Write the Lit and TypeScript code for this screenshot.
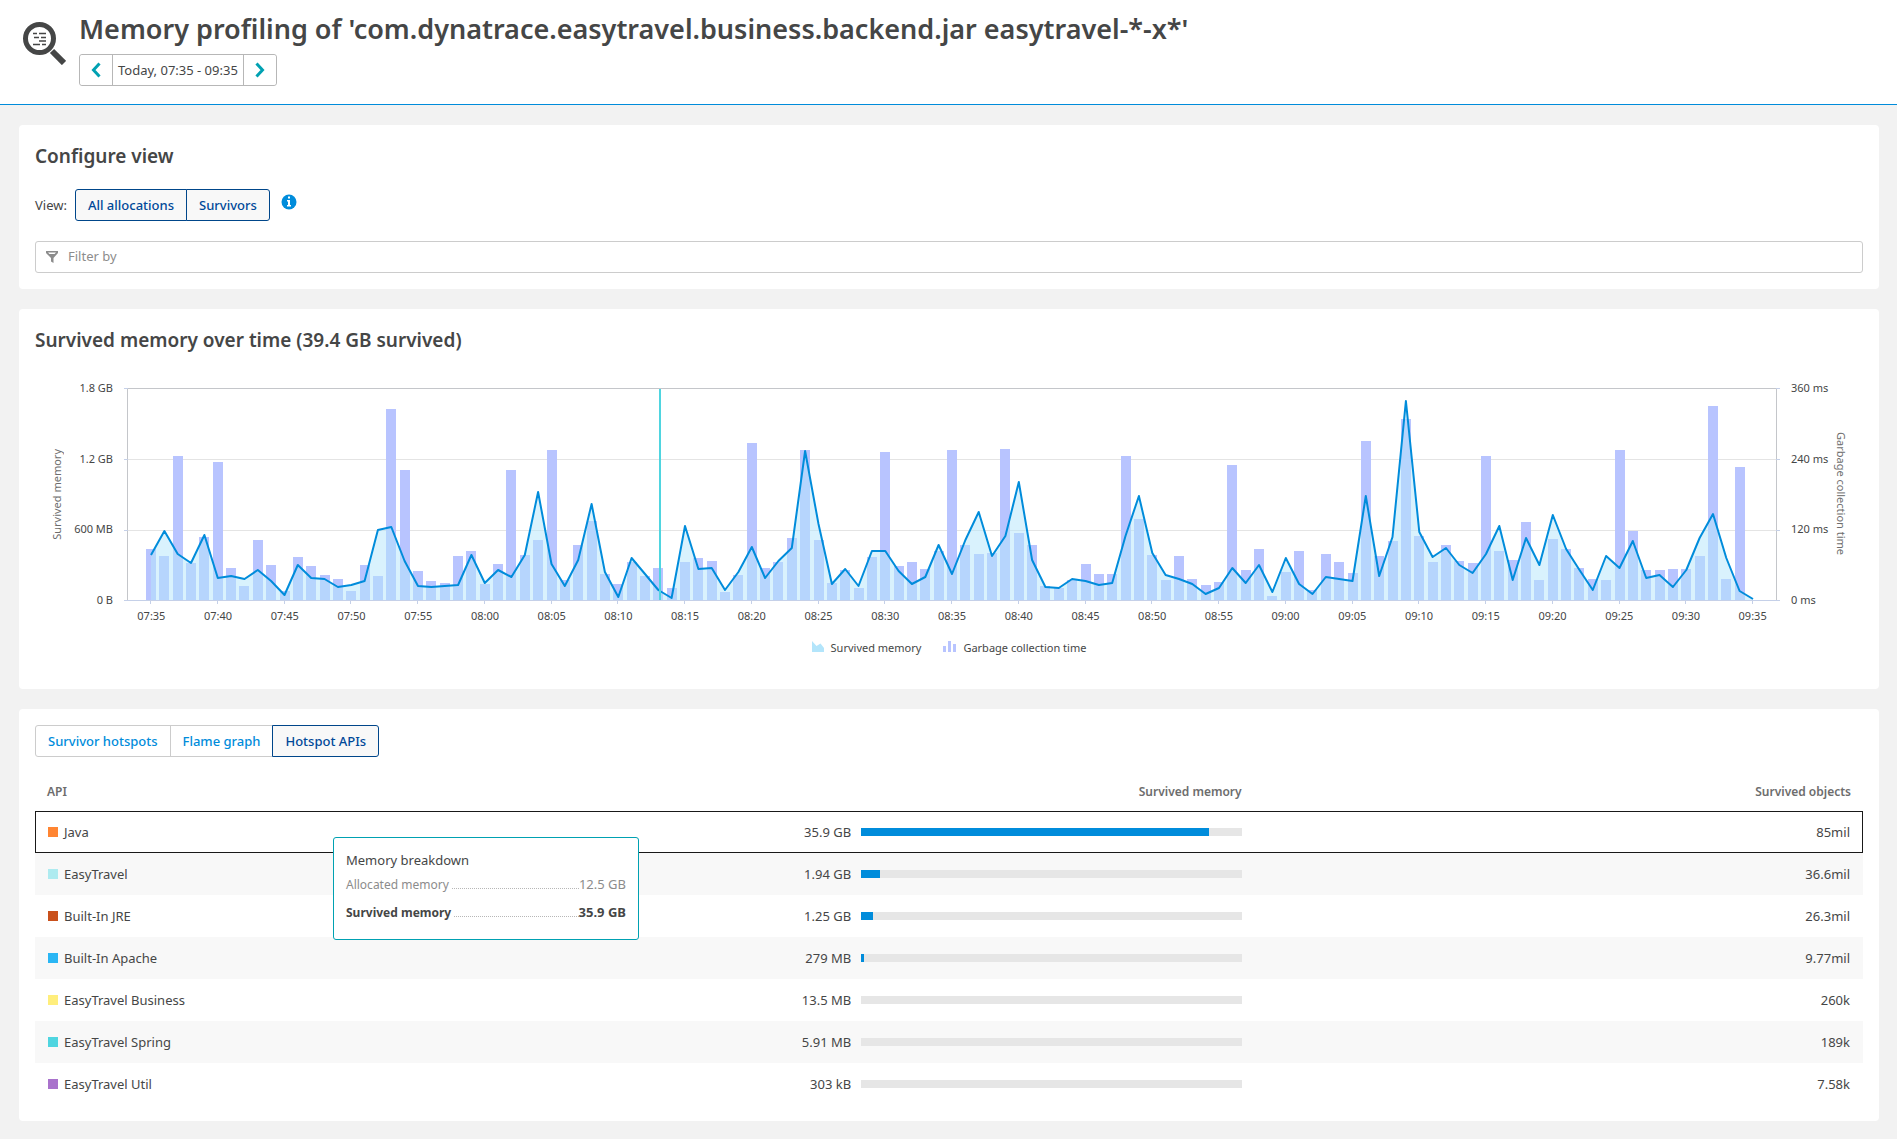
import { LitElement, html, css, svg } from "lit";
import { customElement, property } from "lit/decorators.js";

const SURVIVED = [
  45, 69, 46, 37, 65, 22, 24, 21, 30, 19, 5, 35, 22, 21, 13, 15, 19, 70, 73, 39,
  14, 13, 14, 15, 45, 17, 30, 23, 45, 108, 36, 14, 40, 96, 28, 3, 42, 26, 10, 2,
  74, 31, 32, 10, 28, 53, 22, 39, 52, 149, 76, 16, 31, 14, 49, 49, 29, 16, 23, 55,
  26, 60, 88, 44, 64, 118, 40, 13, 12, 21, 19, 15, 17, 64, 104, 47, 25, 21, 16, 6,
  12, 32, 17, 35, 8, 42, 16, 6, 23, 21, 19, 104, 24, 63, 199, 68, 43, 52, 35, 27,
  46, 74, 20, 62, 35, 85, 51, 30, 10, 44, 32, 59, 22, 25, 13, 30, 62, 86, 42, 9, 1,
];

const GC_TIME = [
  51, 44, 144, 37, 63, 138, 32, 14, 60, 35, 9, 43, 34, 25, 21, 9, 35, 24, 191, 130,
  29, 19, 17, 44, 49, 16, 36, 130, 45, 60, 150, 20, 55, 79, 26, 16, 38, 24, 32, 12,
  38, 42, 39, 8, 25, 157, 32, 38, 62, 150, 60, 17, 30, 12, 43, 148, 34, 38, 31, 49,
  150, 55, 46, 47, 151, 67, 55, 14, 12, 20, 36, 26, 26, 144, 81, 45, 20, 44, 21, 15,
  18, 135, 30, 51, 4, 28, 49, 10, 46, 38, 27, 159, 44, 59, 181, 64, 38, 55, 39, 37,
  144, 49, 40, 78, 20, 61, 51, 32, 21, 20, 150, 69, 30, 30, 31, 31, 44, 194, 21, 133,
];

const PLOT_W = 1648;
const PLOT_H = 212;
const FIRST_X = 23;
const STEP = (PLOT_W - 2 * FIRST_X) / 120;

const TIMES = Array.from({ length: 25 }, (_, i) => {
  const m = 7 * 60 + 35 + i * 5;
  return `${String(Math.floor(m / 60)).padStart(2, "0")}:${String(m % 60).padStart(2, "0")}`;
});

const ROWS = [
  { name: "Java", color: "#ff8532", memory: "35.9 GB", share: 91.3, objects: "85mil" },
  { name: "EasyTravel", color: "#aeebf0", memory: "1.94 GB", share: 5, objects: "36.6mil" },
  { name: "Built-In JRE", color: "#c9501c", memory: "1.25 GB", share: 3.2, objects: "26.3mil" },
  { name: "Built-In Apache", color: "#2ab6f4", memory: "279 MB", share: 0.8, objects: "9.77mil" },
  { name: "EasyTravel Business", color: "#ffee7c", memory: "13.5 MB", share: 0, objects: "260k" },
  { name: "EasyTravel Spring", color: "#4fd5e0", memory: "5.91 MB", share: 0, objects: "189k" },
  { name: "EasyTravel Util", color: "#a972cc", memory: "303 kB", share: 0, objects: "7.58k" },
];

@customElement("memory-chart")
class MemoryChart extends LitElement {
  static styles = css`
    :host { display: block; color: #454646; font-size: 11px; line-height: 16px; }
    .chart {
      display: grid;
      grid-template-columns: 16px 63px 1fr 57px 16px;
      padding: 0 14px;
    }
    .axis-title { display: flex; align-items: center; justify-content: center; color: #6d6d6d; }
    .axis-title span { writing-mode: vertical-rl; white-space: nowrap; }
    .left span { transform: rotate(180deg); }
    .ticks {
      display: flex;
      flex-direction: column;
      justify-content: space-between;
      margin: -8px 0;
      padding: 0 15px;
      white-space: nowrap;
    }
    .ticks.y { padding-left: 0; text-align: right; }
    .plot { display: block; width: 100%; height: 212px; overflow: visible; }
    .times {
      grid-column: 3;
      display: grid;
      grid-template-columns: repeat(25, 1fr);
      margin: 8px -10px 0;
      text-align: center;
    }
    .legend {
      display: flex;
      justify-content: center;
      gap: 22px;
      margin-top: 16px;
    }
    .item { display: flex; align-items: center; gap: 7px; }
    .item svg { margin-bottom: 3px; }
  `;

  render() {
    const x = (i: number) => FIRST_X + i * STEP;
    const points = SURVIVED.map((h, i) => `${x(i).toFixed(1)},${PLOT_H - h}`).join(" ");
    return html`
      <div class="chart">
        <div class="axis-title left"><span>Survived memory</span></div>
        <div class="ticks y"><span>1.8 GB</span><span>1.2 GB</span><span>600 MB</span><span>0 B</span></div>
        <svg class="plot" viewBox="0 0 ${PLOT_W} ${PLOT_H}" preserveAspectRatio="none" role="img"
          aria-label="Survived memory and garbage collection time">
          <g fill="#e4e4e4">
            <rect x="0" y="71" width=${PLOT_W} height="1"></rect>
            <rect x="0" y="142" width=${PLOT_W} height="1"></rect>
          </g>
          <g fill="#b8c4ff">
            ${GC_TIME.map((h, i) => svg`<rect x=${Math.round(x(i) - 5)} y=${PLOT_H - h} width="10" height=${h}></rect>`)}
          </g>
          <polygon fill="#b3e5fb" fill-opacity="0.5"
            points="${FIRST_X},${PLOT_H} ${points} ${PLOT_W - FIRST_X},${PLOT_H}"></polygon>
          <path d="M-.5 212.500V.5H1648.500V212.500" fill="none" stroke="#c4c6ca"></path>
          <path d="M-4 212.500H1652M-4 .5H0M-4 71.500H0M-4 142.500H0M1648 .5h4M1648 71.500h4M1648 142.500h4"
            fill="none" stroke="#c5d0e8"></path>
          ${TIMES.map((_, i) => svg`<rect x=${Math.round(x(i * 5)) - 1} y="213" width="1" height="3" fill="#c5d0e8"></rect>`)}
          <polyline points=${points} fill="none" stroke="#008cdb" stroke-width="2" stroke-linejoin="round"></polyline>
          <rect x="531" y="1" width="2" height="211" fill="#4fd5e0"></rect>
        </svg>
        <div class="ticks"><span>360 ms</span><span>240 ms</span><span>120 ms</span><span>0 ms</span></div>
        <div class="axis-title"><span>Garbage collection time</span></div>
        <div class="times">${TIMES.map((t) => html`<span>${t}</span>`)}</div>
      </div>
      <div class="legend">
        <span class="item">
          <svg width="12" height="11" viewBox="0 0 12 11"><path d="M0 0l4.500 5 4-2.500L12 7v4H0z" fill="#b3e5fb"></path></svg>
          Survived memory
        </span>
        <span class="item">
          <svg width="13" height="11" viewBox="0 0 13 11" fill="#b8c4ff"><path d="M0 5h3v6H0zM5 0h3v11H5zM10 3h3v8h-3z"></path></svg>
          Garbage collection time
        </span>
      </div>
    `;
  }
}

@customElement("hotspot-table")
class HotspotTable extends LitElement {
  @property({ attribute: false }) rows = ROWS;

  static styles = css`
    :host { display: block; }
    table { width: 100%; border-collapse: collapse; table-layout: fixed; }
    th { height: 38px; padding: 0 12px; font-size: 12px; line-height: 16px; font-weight: 600; color: #6d6d6d; text-align: right; }
    th:first-child { text-align: left; }
    td { height: 42px; padding: 0 13px; line-height: 20px; }
    tbody tr:nth-child(even) { background: #f8f8f8; }
    .selected { outline: 1px solid #191919; outline-offset: -1px; }
    .name { position: relative; }
    .api { display: flex; align-items: center; gap: 6px; }
    .swatch { width: 10px; height: 10px; }
    .memory { padding-right: 12px; padding-left: 12px; }
    .meter { display: flex; align-items: center; justify-content: flex-end; gap: 10px; }
    .track { width: 65%; height: 8px; background: #e6e6e6; }
    .fill { height: 8px; background: #008cdb; }
    .objects { text-align: right; }
    .tip {
      position: absolute;
      left: 298px;
      top: 26px;
      z-index: 1;
      width: 306px;
      box-sizing: border-box;
      padding: 12px 12px 17px;
      border: 1px solid #00a1b2;
      border-radius: 3px;
      background: #fff;
    }
    .line { display: flex; align-items: baseline; height: 20px; margin-top: 4px; color: #8c8c8c; }
    .line i { flex: 1; border-bottom: 1px dotted #b7b7b7; }
    .line span { margin-right: 3px; font-size: 12px; }
    .strong { margin-top: 8px; color: #454646; font-weight: 700; }
  `;

  render() {
    return html`
      <table>
        <thead>
          <tr><th scope="col">API</th><th scope="col">Survived memory</th><th scope="col">Survived objects</th></tr>
        </thead>
        <tbody>
          ${this.rows.map((r, i) => html`
            <tr class=${i === 0 ? "selected" : ""}>
              <td class="name">
                <div class="api"><span class="swatch" style="background:${r.color}"></span>${r.name}</div>
                ${i === 0 ? html`
                  <div class="tip" role="tooltip">
                    <div>Memory breakdown</div>
                    <div class="line"><span>Allocated memory</span><i></i>12.5 GB</div>
                    <div class="line strong"><span>Survived memory</span><i></i>35.9 GB</div>
                  </div>` : ""}
              </td>
              <td class="memory">
                <div class="meter">${r.memory}<div class="track"><div class="fill" style="width:${r.share}%"></div></div></div>
              </td>
              <td class="objects">${r.objects}</td>
            </tr>`)}
        </tbody>
      </table>
    `;
  }
}

@customElement("app-root")
class AppRoot extends LitElement {
  static styles = css`
    :host {
      display: block;
      min-height: 100vh;
      background: #f2f2f2;
      color: #454646;
      font-family: "Noto Sans", "Open Sans", sans-serif;
      font-size: 13px;
      line-height: 20px;
    }
    h1, h2 { margin: 0; font-weight: 600; }
    h1 { font-size: 27px; line-height: 36px; }
    h2 { font-size: 19px; line-height: 24px; }
    button { font: inherit; color: inherit; background: #fff; cursor: pointer; }
    .header {
      display: flex;
      align-items: flex-start;
      gap: 13px;
      padding: 11px 23px 18px;
      border-bottom: 1px solid #008cdb;
      background: #fff;
    }
    .logo { margin-top: 11px; flex: none; }
    .range { display: inline-flex; height: 32px; margin-top: 7px; box-sizing: border-box; border: 1px solid #b7b7b7; border-radius: 3px; }
    .range button { display: flex; align-items: center; justify-content: center; width: 32px; padding: 0; border: 0; border-radius: 3px; }
    .label { padding: 0 5px; line-height: 30px; border: solid #b7b7b7; border-width: 0 1px; }
    main { display: grid; gap: 20px; padding: 20px 18px 18px 19px; }
    .card { padding: 16px; border-radius: 4px; background: #fff; }
    .card h2 { padding: 3px 0 1px; }
    .view { display: flex; align-items: center; gap: 8px; margin: 20px 0; }
    .group { display: inline-flex; height: 32px; }
    .group button {
      padding: 0 12px;
      margin-left: -1px;
      border: 1px solid #ccc;
      color: #008cdb;
      font-weight: 500;
    }
    .group button:first-child { margin-left: 0; border-radius: 3px 0 0 3px; }
    .group button:last-child { border-radius: 0 3px 3px 0; }
    .group .on { border-color: #00468a; background: #f8f8f8; color: #004999; }
    .info { margin: 0 0 6px 3px; }
    .filter { display: flex; align-items: center; gap: 10px; height: 32px; box-sizing: border-box; padding: 0 10px; border: 1px solid #ccc; border-radius: 3px; }
    .filter input { flex: 1; border: 0; padding: 0 0 2px; outline: 0; background: none; font: inherit; color: inherit; }
    .filter input::placeholder { color: #8c8c8c; opacity: 1; }
    .trend { padding-bottom: 33px; }
    memory-chart { margin-top: 35px; }
    hotspot-table { margin-top: 16px; }
  `;

  render() {
    return html`
      <header class="header">
        <svg class="logo" width="43" height="43" viewBox="0 0 43 43" fill="none" stroke="#454646">
          <circle cx="16.500" cy="16.500" r="14" stroke-width="5"></circle>
          <path d="M29 29l12 12" stroke-width="6"></path>
          <path d="M10 11.500h4M16 11.500h7M11 15.500h5M18 15.500h5M16 19h7M10 22.500h7M19 22.500h4" stroke-width="1.500"></path>
        </svg>
        <div>
          <h1>Memory profiling of 'com.dynatrace.easytravel.business.backend.jar easytravel-*-x*'</h1>
          <div class="range">
            <button aria-label="Previous timeframe">
              <svg width="10" height="16" viewBox="0 0 10 16" fill="none" stroke="#00a1b2" stroke-width="3"><path d="M8.500 1.500L2.500 8l6 6.500"></path></svg>
            </button>
            <span class="label">Today, 07:35 - 09:35</span>
            <button aria-label="Next timeframe">
              <svg width="10" height="16" viewBox="0 0 10 16" fill="none" stroke="#00a1b2" stroke-width="3"><path d="M1.500 1.500L7.500 8l-6 6.500"></path></svg>
            </button>
          </div>
        </div>
      </header>
      <main>
        <section class="card">
          <h2>Configure view</h2>
          <div class="view">
            <span>View:</span>
            <div class="group" role="group" aria-label="View">
              <button class="on">All allocations</button><button class="on">Survivors</button>
            </div>
            <svg class="info" width="16" height="16" viewBox="0 0 16 16">
              <circle cx="8" cy="8" r="7.500" fill="#008cdb"></circle>
              <path d="M7 2.500h2v2H7zM6 6h3v5h1v1.500H6V11h1V7.500H6z" fill="#fff"></path>
            </svg>
          </div>
          <div class="filter">
            <svg width="12" height="12" viewBox="0 0 12 12"><path d="M0 0h12v2L7.500 7v5L5 10.500V7L0 2zM2 1.500L3.500 3h5L10 1.500z" fill="#8c8c8c" fill-rule="evenodd"></path></svg>
            <input type="text" placeholder="Filter by" aria-label="Filter by" />
          </div>
        </section>
        <section class="card trend">
          <h2>Survived memory over time (39.4 GB survived)</h2>
          <memory-chart></memory-chart>
        </section>
        <section class="card">
          <div class="group" role="group" aria-label="Analysis">
            <button>Survivor hotspots</button><button>Flame graph</button><button class="on">Hotspot APIs</button>
          </div>
          <hotspot-table></hotspot-table>
        </section>
      </main>
    `;
  }
}
